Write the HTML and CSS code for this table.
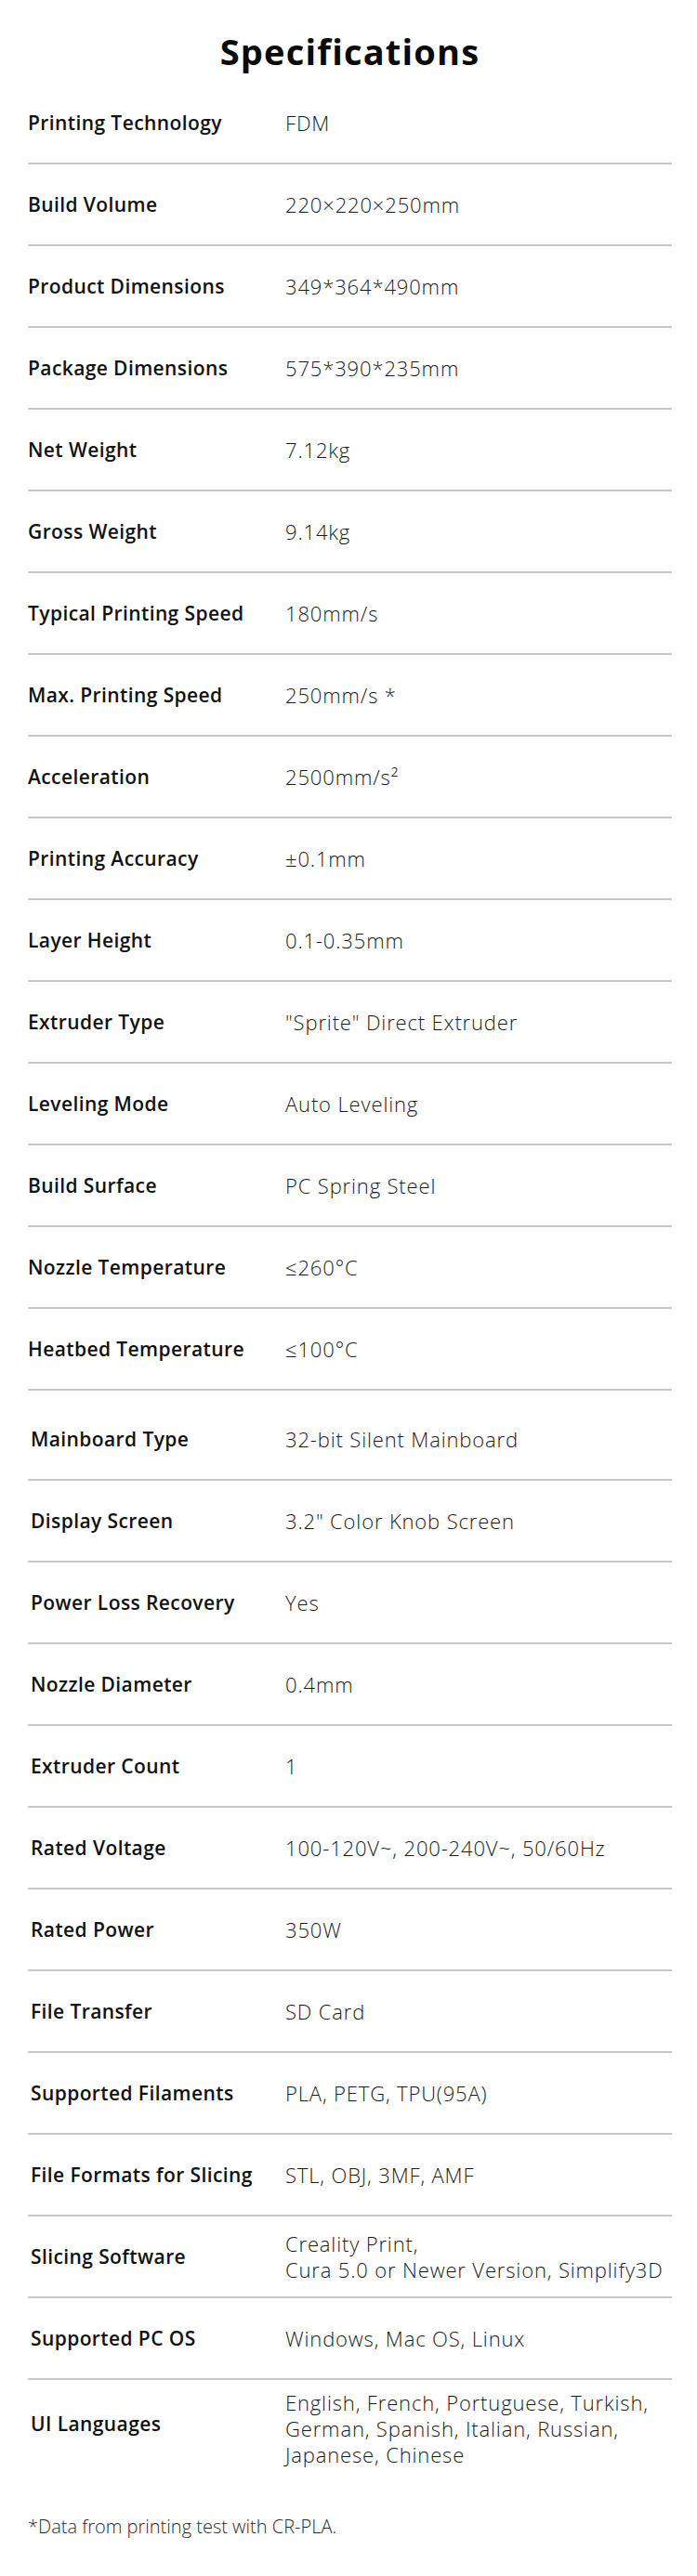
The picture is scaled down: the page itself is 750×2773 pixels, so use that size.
FILE: index.html
```html
<!DOCTYPE html>
<html lang="en">
<head>
<meta charset="utf-8">
<title>Specifications</title>
<link rel="stylesheet" href="styles.css">
</head>
<body>
<main class="specs">
  <h1 class="title">Specifications</h1>
  <dl class="group">
    <div class="row"><dt class="label">Printing Technology</dt><dd class="value">FDM</dd></div>
    <div class="row"><dt class="label">Build Volume</dt><dd class="value">220×220×250mm</dd></div>
    <div class="row"><dt class="label">Product Dimensions</dt><dd class="value">349*364*490mm</dd></div>
    <div class="row"><dt class="label">Package Dimensions</dt><dd class="value">575*390*235mm</dd></div>
    <div class="row"><dt class="label">Net Weight</dt><dd class="value">7.12kg</dd></div>
    <div class="row"><dt class="label">Gross Weight</dt><dd class="value">9.14kg</dd></div>
    <div class="row"><dt class="label">Typical Printing Speed</dt><dd class="value">180mm/s</dd></div>
    <div class="row"><dt class="label">Max. Printing Speed</dt><dd class="value">250mm/s *</dd></div>
    <div class="row"><dt class="label">Acceleration</dt><dd class="value">2500mm/s²</dd></div>
    <div class="row"><dt class="label">Printing Accuracy</dt><dd class="value">±0.1mm</dd></div>
    <div class="row"><dt class="label">Layer Height</dt><dd class="value">0.1-0.35mm</dd></div>
    <div class="row"><dt class="label">Extruder Type</dt><dd class="value">"Sprite" Direct Extruder</dd></div>
    <div class="row"><dt class="label">Leveling Mode</dt><dd class="value">Auto Leveling</dd></div>
    <div class="row"><dt class="label">Build Surface</dt><dd class="value">PC Spring Steel</dd></div>
    <div class="row"><dt class="label">Nozzle Temperature</dt><dd class="value">≤260°C</dd></div>
    <div class="row"><dt class="label">Heatbed Temperature</dt><dd class="value">≤100°C</dd></div>
  </dl>
  <dl class="group group-second">
    <div class="row"><dt class="label">Mainboard Type</dt><dd class="value">32-bit Silent Mainboard</dd></div>
    <div class="row"><dt class="label">Display Screen</dt><dd class="value">3.2" Color Knob Screen</dd></div>
    <div class="row"><dt class="label">Power Loss Recovery</dt><dd class="value">Yes</dd></div>
    <div class="row"><dt class="label">Nozzle Diameter</dt><dd class="value">0.4mm</dd></div>
    <div class="row"><dt class="label">Extruder Count</dt><dd class="value">1</dd></div>
    <div class="row"><dt class="label">Rated Voltage</dt><dd class="value">100-120V~, 200-240V~, 50/60Hz</dd></div>
    <div class="row"><dt class="label">Rated Power</dt><dd class="value">350W</dd></div>
    <div class="row"><dt class="label">File Transfer</dt><dd class="value">SD Card</dd></div>
    <div class="row"><dt class="label">Supported Filaments</dt><dd class="value">PLA, PETG, TPU(95A)</dd></div>
    <div class="row"><dt class="label">File Formats for Slicing</dt><dd class="value">STL, OBJ, 3MF, AMF</dd></div>
    <div class="row"><dt class="label">Slicing Software</dt><dd class="value">Creality Print,<br>Cura 5.0 or Newer Version, Simplify3D</dd></div>
    <div class="row"><dt class="label">Supported PC OS</dt><dd class="value">Windows, Mac OS, Linux</dd></div>
    <div class="row row-last"><dt class="label">UI Languages</dt><dd class="value value-top">English, French, Portuguese, Turkish,<br>German, Spanish, Italian, Russian,<br>Japanese, Chinese</dd></div>
  </dl>
  <p class="note">*Data from printing test with CR-PLA.</p>
</main>
</body>
</html>
```

FILE: styles.css
```css
html, body {
  margin: 0;
  padding: 0;
  background: #ffffff;
}

.specs {
  width: 750px;
  box-sizing: border-box;
  padding: 0 27px 40px 30px;
  font-family: "Open Sans", "Liberation Sans", sans-serif;
  color: #111111;
}

.title {
  margin: 0;
  height: 89px;
  box-sizing: border-box;
  padding-top: 20px;
  display: flex;
  align-items: center;
  justify-content: center;
  font-size: 38px;
  font-weight: 700;
  letter-spacing: 1.2px;
  line-height: 1;
  color: #0a0a0a;
}

.group {
  margin: 0;
  padding: 0;
}

.group-second {
  margin-top: 9px;
}

.row {
  display: grid;
  grid-template-columns: 277px 1fr;
  align-items: center;
  height: 88px;
  box-sizing: border-box;
  border-bottom: 2px solid #c8c8c8;
}

.row-last {
  border-bottom: none;
}

.label {
  margin: 0;
  font-size: 21px;
  font-weight: 600;
  letter-spacing: 0.4px;
  line-height: 28px;
  color: #111111;
  white-space: nowrap;
}

.group-second .label {
  padding-left: 3px;
}

.value {
  margin: 0;
  font-size: 22px;
  font-weight: 300;
  letter-spacing: 0.85px;
  line-height: 28px;
  color: #1a1a1a;
  white-space: nowrap;
}

.value-top {
  align-self: start;
  padding-top: 10px;
}

.note {
  margin: 57px 0 0;
  font-size: 20px;
  font-weight: 300;
  letter-spacing: 0;
  line-height: 26px;
  color: #2a2a2a;
}
```
